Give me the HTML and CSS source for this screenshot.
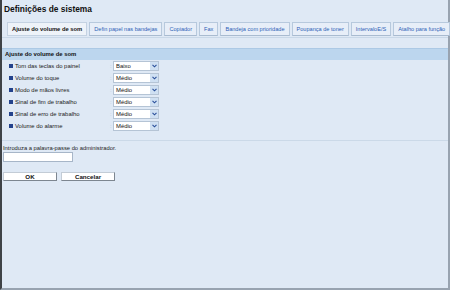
FILE: index.html
```html
<!DOCTYPE html>
<html>
<head>
  <meta charset="UTF-8" />
  <title>Definições de sistema</title>
  <link rel="stylesheet" href="styles.css">
</head>
<body>
  <div class="page">
    <h1 class="title">Definições de sistema</h1>

    <div class="tabs">
      <span class="tab active">Ajuste do volume de som</span>
      <span class="tab">Defin papel nas bandejas</span>
      <span class="tab">Copiador</span>
      <span class="tab">Fax</span>
      <span class="tab">Bandeja com prioridade</span>
      <span class="tab">Poupança de toner</span>
      <span class="tab">IntervaloE/S</span>
      <span class="tab">Atalho para função</span>
    </div>

    <div class="section-head">Ajuste do volume de som</div>

    <div class="rows">
      <div class="row"><span class="bullet"></span><span class="label">Tom das teclas do painel</span><span class="colon">:</span><div class="select">Baixo<span class="arrow"><svg width="5" height="4" viewBox="0 0 5 4"><path d="M0.5 0.8 L2.5 2.8 L4.5 0.8" fill="none" stroke="#2a4f9a" stroke-width="1.1"/></svg></span></div></div>
      <div class="row"><span class="bullet"></span><span class="label">Volume do toque</span><span class="colon">:</span><div class="select">Médio<span class="arrow"><svg width="5" height="4" viewBox="0 0 5 4"><path d="M0.5 0.8 L2.5 2.8 L4.5 0.8" fill="none" stroke="#2a4f9a" stroke-width="1.1"/></svg></span></div></div>
      <div class="row"><span class="bullet"></span><span class="label">Modo de mãos livres</span><span class="colon">:</span><div class="select">Médio<span class="arrow"><svg width="5" height="4" viewBox="0 0 5 4"><path d="M0.5 0.8 L2.5 2.8 L4.5 0.8" fill="none" stroke="#2a4f9a" stroke-width="1.1"/></svg></span></div></div>
      <div class="row"><span class="bullet"></span><span class="label">Sinal de fim de trabalho</span><span class="colon">:</span><div class="select">Médio<span class="arrow"><svg width="5" height="4" viewBox="0 0 5 4"><path d="M0.5 0.8 L2.5 2.8 L4.5 0.8" fill="none" stroke="#2a4f9a" stroke-width="1.1"/></svg></span></div></div>
      <div class="row"><span class="bullet"></span><span class="label">Sinal de erro de trabalho</span><span class="colon">:</span><div class="select">Médio<span class="arrow"><svg width="5" height="4" viewBox="0 0 5 4"><path d="M0.5 0.8 L2.5 2.8 L4.5 0.8" fill="none" stroke="#2a4f9a" stroke-width="1.1"/></svg></span></div></div>
      <div class="row"><span class="bullet"></span><span class="label">Volume do alarme</span><span class="colon">:</span><div class="select">Médio<span class="arrow"><svg width="5" height="4" viewBox="0 0 5 4"><path d="M0.5 0.8 L2.5 2.8 L4.5 0.8" fill="none" stroke="#2a4f9a" stroke-width="1.1"/></svg></span></div></div>
    </div>

    <div class="login">
      <p class="hint">Introduza a palavra-passe do administrador.</p>
      <div class="password"></div>
      <div class="buttons">
        <span class="btn">OK</span>
        <span class="btn">Cancelar</span>
      </div>
    </div>
  </div>
</body>
</html>
```

FILE: styles.css
```css
html, body {
  margin: 0;
  padding: 0;
}
body {
  font-family: "Liberation Sans", Arial, sans-serif;
  background-color: #dfe9f5;
}
.page {
  box-sizing: border-box;
  height: 290px;
  background-color: #dfe9f5;
  border-left: 2px solid #3f4347;
  border-right: 2px solid #98a3b0;
  border-bottom: 2px solid #98a3b0;
}
.title {
  margin: 0;
  padding: 4px 0 0 2px;
  font-size: 8.4px;
  line-height: 10px;
  font-weight: bold;
  color: #111;
}
.tabs {
  display: flex;
  gap: 2px;
  margin-top: 8px;
  padding-left: 5px;
  padding-bottom: 1px;
  border-bottom: 1px solid #c9d8e8;
}
.tab {
  flex-shrink: 0;
  white-space: nowrap;
  height: 12px;
  line-height: 12px;
  padding: 0 4px;
  font-size: 5.6px;
  color: #2d5fb7;
  background-color: #e7eef8;
  border: 1px solid #b7c9dd;
  border-bottom-color: #a9bbd0;
}
.tab.active {
  padding: 0 4px;
  font-size: 5.8px;
  color: #111;
  font-weight: bold;
  background-color: #eef3f9;
  border-color: #c4d2e2;
}
.section-head {
  margin-top: 10px;
  height: 11px;
  line-height: 11px;
  padding-left: 3px;
  font-size: 5.9px;
  font-weight: bold;
  color: #111;
  background-color: #bcd6ee;
  border-top: 1px solid #acc9e5;
}
.row {
  display: flex;
  align-items: center;
  height: 12px;
  padding-left: 7px;
  font-size: 5.9px;
  color: #222;
}
.bullet {
  width: 4px;
  height: 4px;
  margin-right: 2px;
  background-color: #23428c;
}
.label {
  width: 95px;
}
.colon {
  width: 3px;
  color: #b4c2d2;
}
.select {
  box-sizing: border-box;
  display: flex;
  align-items: center;
  width: 46px;
  height: 10px;
  padding-left: 2px;
  background-color: #fff;
  border: 1px solid #b5c4d5;
  color: #111;
}
.arrow {
  display: flex;
  align-items: center;
  justify-content: center;
  margin-left: auto;
  width: 8px;
  height: 8px;
  background-color: #cfe0f2;
}
.login {
  margin-top: 8px;
  padding: 3px 0 0 1px;
  border-top: 1px solid #cbd9e8;
}
.hint {
  margin: 0;
  font-size: 5.8px;
  line-height: 8px;
  color: #222;
}
.password {
  box-sizing: border-box;
  width: 70px;
  height: 10px;
  background-color: #fff;
  border: 1px solid #a7b6c8;
}
.buttons {
  display: flex;
  gap: 4px;
  margin-top: 10px;
}
.btn {
  box-sizing: border-box;
  width: 54px;
  height: 9px;
  line-height: 7px;
  text-align: center;
  font-size: 6.2px;
  font-weight: bold;
  color: #111;
  background-color: #fff;
  border: 1px solid #c3ccd6;
  border-right-color: #7d8690;
  border-bottom-color: #7d8690;
}
```
